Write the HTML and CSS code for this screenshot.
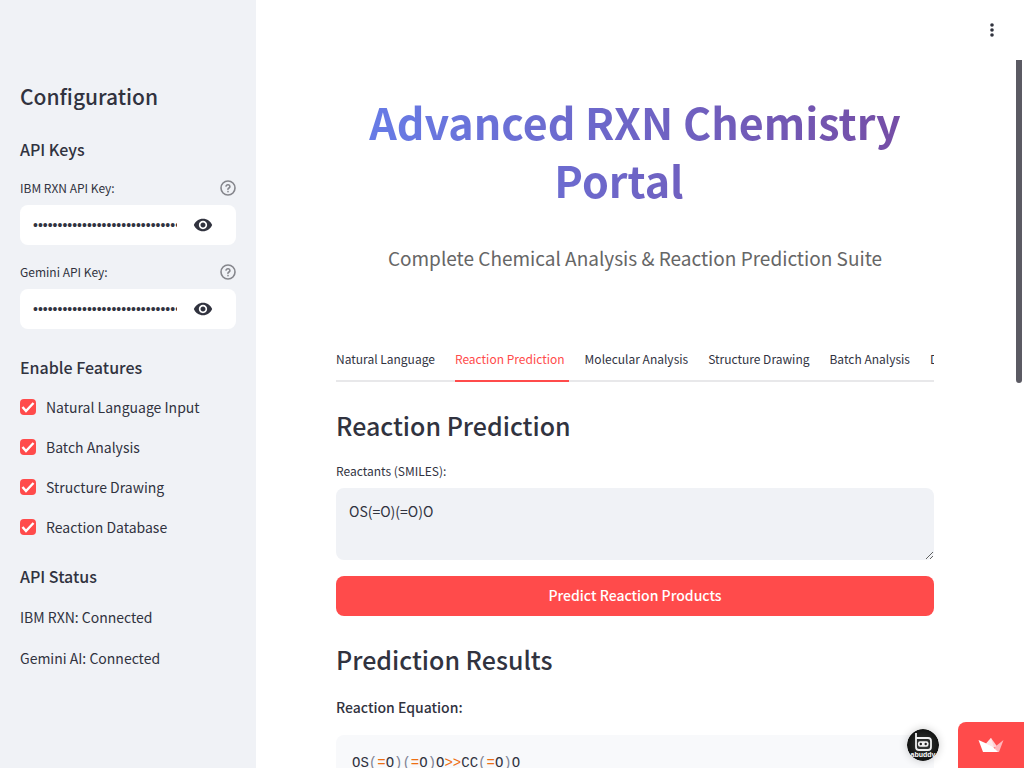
FILE: index.html
```html
<!DOCTYPE html>
<html lang="en">
<head>
<meta charset="utf-8">
<meta name="viewport" content="width=device-width, initial-scale=1">
<title>Advanced RXN Chemistry Portal</title>
<link rel="stylesheet" href="styles.css">
</head>
<body>
<svg class="sprite" aria-hidden="true">
  <symbol id="help" viewBox="0 0 24 24"><g fill="none" stroke="currentColor" stroke-width="2.400"><circle cx="12" cy="12" r="10.500"/><path d="M9.100 9a3 3 0 0 1 5.800 1c0 2-3 2-3 4" stroke-linecap="round"/><path d="M12 17.500h.01" stroke-linecap="round"/></g></symbol>
  <symbol id="eye" viewBox="0 0 24 24"><path fill="currentColor" d="M12 4.500C7 4.500 2.730 7.610 1 12c1.730 4.390 6 7.500 11 7.500s9.270-3.110 11-7.500c-1.730-4.390-6-7.500-11-7.500zM12 17c-2.760 0-5-2.240-5-5s2.240-5 5-5 5 2.240 5 5-2.240 5-5 5zm0-8c-1.660 0-3 1.340-3 3s1.340 3 3 3 3-1.340 3-3-1.340-3-3-3z"/></symbol>
</svg>
<div class="app">
  <aside class="sidebar">
    <h2 class="sidebar-title">Configuration</h2>
    <h3 class="sidebar-heading">API Keys</h3>
    <div class="field">
      <div class="field-head">
        <label class="label" for="rxn-key">IBM RXN API Key:</label>
        <button class="icon-button" type="button" aria-label="Help for IBM RXN API Key"><svg class="help-icon"><use href="#help"/></svg></button>
      </div>
      <div class="password">
        <input class="password-input" id="rxn-key" type="password" value="abcdefghijklmnopqrstuvwxyzabcdefghijklmn">
        <button class="icon-button eye-button" type="button" aria-label="Show password text"><svg class="eye-icon"><use href="#eye"/></svg></button>
      </div>
    </div>
    <div class="field">
      <div class="field-head">
        <label class="label" for="gemini-key">Gemini API Key:</label>
        <button class="icon-button" type="button" aria-label="Help for Gemini API Key"><svg class="help-icon"><use href="#help"/></svg></button>
      </div>
      <div class="password">
        <input class="password-input" id="gemini-key" type="password" value="abcdefghijklmnopqrstuvwxyzabcdefghijklmn">
        <button class="icon-button eye-button" type="button" aria-label="Show password text"><svg class="eye-icon"><use href="#eye"/></svg></button>
      </div>
    </div>
    <h3 class="sidebar-heading features-heading">Enable Features</h3>
    <div class="checks">
      <label class="check"><input class="check-box" type="checkbox" checked>Natural Language Input</label>
      <label class="check"><input class="check-box" type="checkbox" checked>Batch Analysis</label>
      <label class="check"><input class="check-box" type="checkbox" checked>Structure Drawing</label>
      <label class="check"><input class="check-box" type="checkbox" checked>Reaction Database</label>
    </div>
    <h3 class="sidebar-heading status-heading">API Status</h3>
    <p class="status">IBM RXN: Connected</p>
    <p class="status">Gemini AI: Connected</p>
  </aside>
  <div class="page">
    <header class="toolbar">
      <button class="icon-button" type="button" aria-label="Main menu"><svg class="menu-icon" viewBox="0 0 20 20"><circle cx="10" cy="5" r="1.800"/><circle cx="10" cy="10" r="1.800"/><circle cx="10" cy="15" r="1.800"/></svg></button>
    </header>
    <div class="body">
      <main class="content">
        <h1 class="title">Advanced RXN Chemistry Portal<span class="anchor"></span></h1>
        <p class="subtitle">Complete Chemical Analysis &amp; Reaction Prediction Suite</p>
        <div class="tabs" role="tablist">
          <button class="tab" type="button" role="tab">Natural Language</button>
          <button class="tab active" type="button" role="tab" aria-selected="true">Reaction Prediction</button>
          <button class="tab" type="button" role="tab">Molecular Analysis</button>
          <button class="tab" type="button" role="tab">Structure Drawing</button>
          <button class="tab" type="button" role="tab">Batch Analysis</button>
          <button class="tab" type="button" role="tab">Database</button>
        </div>
        <h2 class="heading">Reaction Prediction</h2>
        <label class="label" for="reactants">Reactants (SMILES):</label>
        <textarea class="smiles" id="reactants">OS(=O)(=O)O</textarea>
        <button class="primary" type="button">Predict Reaction Products</button>
        <h2 class="heading">Prediction Results</h2>
        <p class="equation-label">Reaction Equation:</p>
        <pre class="code"><code>OS<i>(</i><b>=</b>O<i>)</i><i>(</i><b>=</b>O<i>)</i>O<b>&gt;&gt;</b>CC<i>(</i><b>=</b>O<i>)</i>O</code></pre>
      </main>
      <div class="rail"><div class="thumb"></div></div>
    </div>
  </div>
  <div class="badges">
    <svg class="avatar" viewBox="0 0 32 32" role="img" aria-label="abuddy">
      <defs><radialGradient id="dark"><stop offset="0" stop-color="#3c3f3d"/><stop offset="1" stop-color="#111211"/></radialGradient></defs>
      <circle cx="16" cy="16" r="16" fill="url(#dark)"/>
      <path d="M9 4v14q0 3 3 3h9q3 0 3-3v-6q0-3-3-3H9" fill="none" stroke="#f2f2f2" stroke-width="1.800"/>
      <rect x="11" y="12.200" width="10.500" height="5.500" rx="2" fill="#f2f2f2"/>
      <circle cx="13.800" cy="15" r="1.200" fill="#222"/><circle cx="18.700" cy="15" r="1.200" fill="#222"/>
      <text class="avatar-text" x="16" y="28" text-anchor="middle">abuddy</text>
    </svg>
    <a class="hosted" href="#" aria-label="Hosted with Streamlit">
      <svg class="crown" viewBox="0 0 26 16"><path fill="#ffd0d4" d="M7.500 7.500 13 1l6.500 9L13 11z"/><path fill="#ffb5ba" d="M18 9 25.500 3 21 15h-6z"/><path fill="#fff" d="M.5 3 14 9l6 6H5z"/><path fill="#ffe7e8" d="M8 6.400 13 1l3 9.500z"/></svg>
    </a>
  </div>
</div>
</body>
</html>
```
FILE: styles.css
```css
* { box-sizing: border-box; }
body {
  margin: 0;
  color: #31333f;
  background: #fff;
  font: 14px/24px "Noto Sans CJK SC", "Noto Sans", sans-serif;
}
h1, h2, h3, p, pre { margin: 0; }
button, input, textarea { font: inherit; color: inherit; }
.sprite { display: none; }
.app { position: relative; display: flex; height: 100vh; overflow: hidden; }
.sidebar { flex: none; width: 256px; padding: 80px 20px 0; background: #f0f2f6; }
.sidebar-title { font-size: 21px; line-height: 32px; font-weight: 500; margin-bottom: 23px; }
.sidebar-heading { font-size: 16px; line-height: 28px; font-weight: 500; }
.features-heading { margin-top: 24px; }
.status-heading { margin-top: 23px; margin-bottom: 15px; }
.field { margin-top: 13px; }
.field + .field { margin-top: 15px; }
.field-head { display: flex; justify-content: space-between; align-items: center; margin-bottom: 5px; }
.label { display: block; font-size: 12px; line-height: 24px; }
.icon-button { display: flex; padding: 0; border: 0; background: none; cursor: pointer; }
.help-icon { width: 16px; height: 16px; color: #85868c; }
.password { display: flex; align-items: center; height: 40px; padding: 0 23px 0 13px; background: #fff; border-radius: 8px; }
.password-input { flex: 1; min-width: 0; padding: 0; border: 0; outline: 0; background: none; font-family: "Liberation Sans", sans-serif; }
.eye-button { margin-left: 16px; }
.eye-icon { width: 20px; height: 20px; }
.checks { display: grid; gap: 16px; margin-top: 14px; }
.check { display: flex; align-items: center; gap: 10px; }
.check-box {
  appearance: none; width: 16px; height: 16px; margin: 0; border-radius: 4px;
  background: #ff4b4b url("data:image/svg+xml,%3Csvg xmlns='http://www.w3.org/2000/svg' viewBox='0 0 16 16'%3E%3Cpath d='M2.500 8l3.500 4 7.500-8' fill='none' stroke='white' stroke-width='2.400'/%3E%3C/svg%3E");
}
.status { margin-bottom: 17px; }
.page { flex: 1; min-width: 0; display: flex; flex-direction: column; }
.toolbar { flex: none; display: flex; justify-content: flex-end; align-items: center; height: 60px; padding: 0 22px; }
.menu-icon { width: 20px; height: 20px; fill: #31333f; }
.body { flex: 1; min-height: 0; display: flex; }
.content { flex: 1; min-width: 0; padding: 32px 80px 0; overflow: hidden; }
.rail { width: 10px; padding: 0 2px; }
.thumb { height: 323px; background: #5b5a63; border-radius: 0 0 3px 3px; }
.title {
  font-size: 43px; line-height: 58px; font-weight: 700; text-align: center;
  color: transparent; background: linear-gradient(90deg, #667eea, #764ba2); background-clip: text;
}
.anchor { display: inline-block; width: 32px; }
.subtitle { margin-top: 34px; font-size: 19px; line-height: 32px; text-align: center; color: #666; }
.tabs { display: flex; gap: 16px; margin-top: 66px; overflow: hidden; box-shadow: inset 0 -2px #e8e8ea; }
.tab { flex: none; height: 42px; padding: 0 4px 2px 0; border: 0; border-bottom: 2px solid transparent; background: none; font-size: 12px; white-space: nowrap; }
.active { color: #ff4b4b; border-color: #ff4b4b; }
.heading { margin: 26px 0 17px; font-size: 25px; line-height: 34px; font-weight: 500; }
.smiles { display: block; width: 100%; height: 72px; margin: 5px 0 16px; padding: 11px 13px; border: 0; border-radius: 8px; outline: 0; background: #f0f2f6; resize: vertical; }
.primary { width: 100%; height: 40px; padding: 0 0 2px; border: 0; border-radius: 8px; color: #fff; background: #ff4b4b; font-weight: 500; }
.equation-label { padding-top: 2px; font-weight: 500; }
.code { margin-top: 16px; padding: 17px 16px; background: #f8f9fb; border-radius: 8px; font: 14px/22px "Liberation Mono", monospace; }
.code code { font: inherit; }
.code b { font-weight: 400; color: #ed6f13; }
.code i { font-style: normal; color: #808495; }
.badges { position: absolute; right: 0; bottom: 0; display: flex; align-items: center; gap: 19px; }
.avatar { width: 32px; height: 32px; border-radius: 50%; box-shadow: 0 0 8px #0003; }
.avatar-text { font: 700 7px "Liberation Sans", sans-serif; fill: #fff; }
.hosted { display: flex; align-items: center; justify-content: center; width: 66px; height: 46px; background: #ff4b4b; border-radius: 8px 0 0; }
.crown { width: 26px; height: 16px; }
```
